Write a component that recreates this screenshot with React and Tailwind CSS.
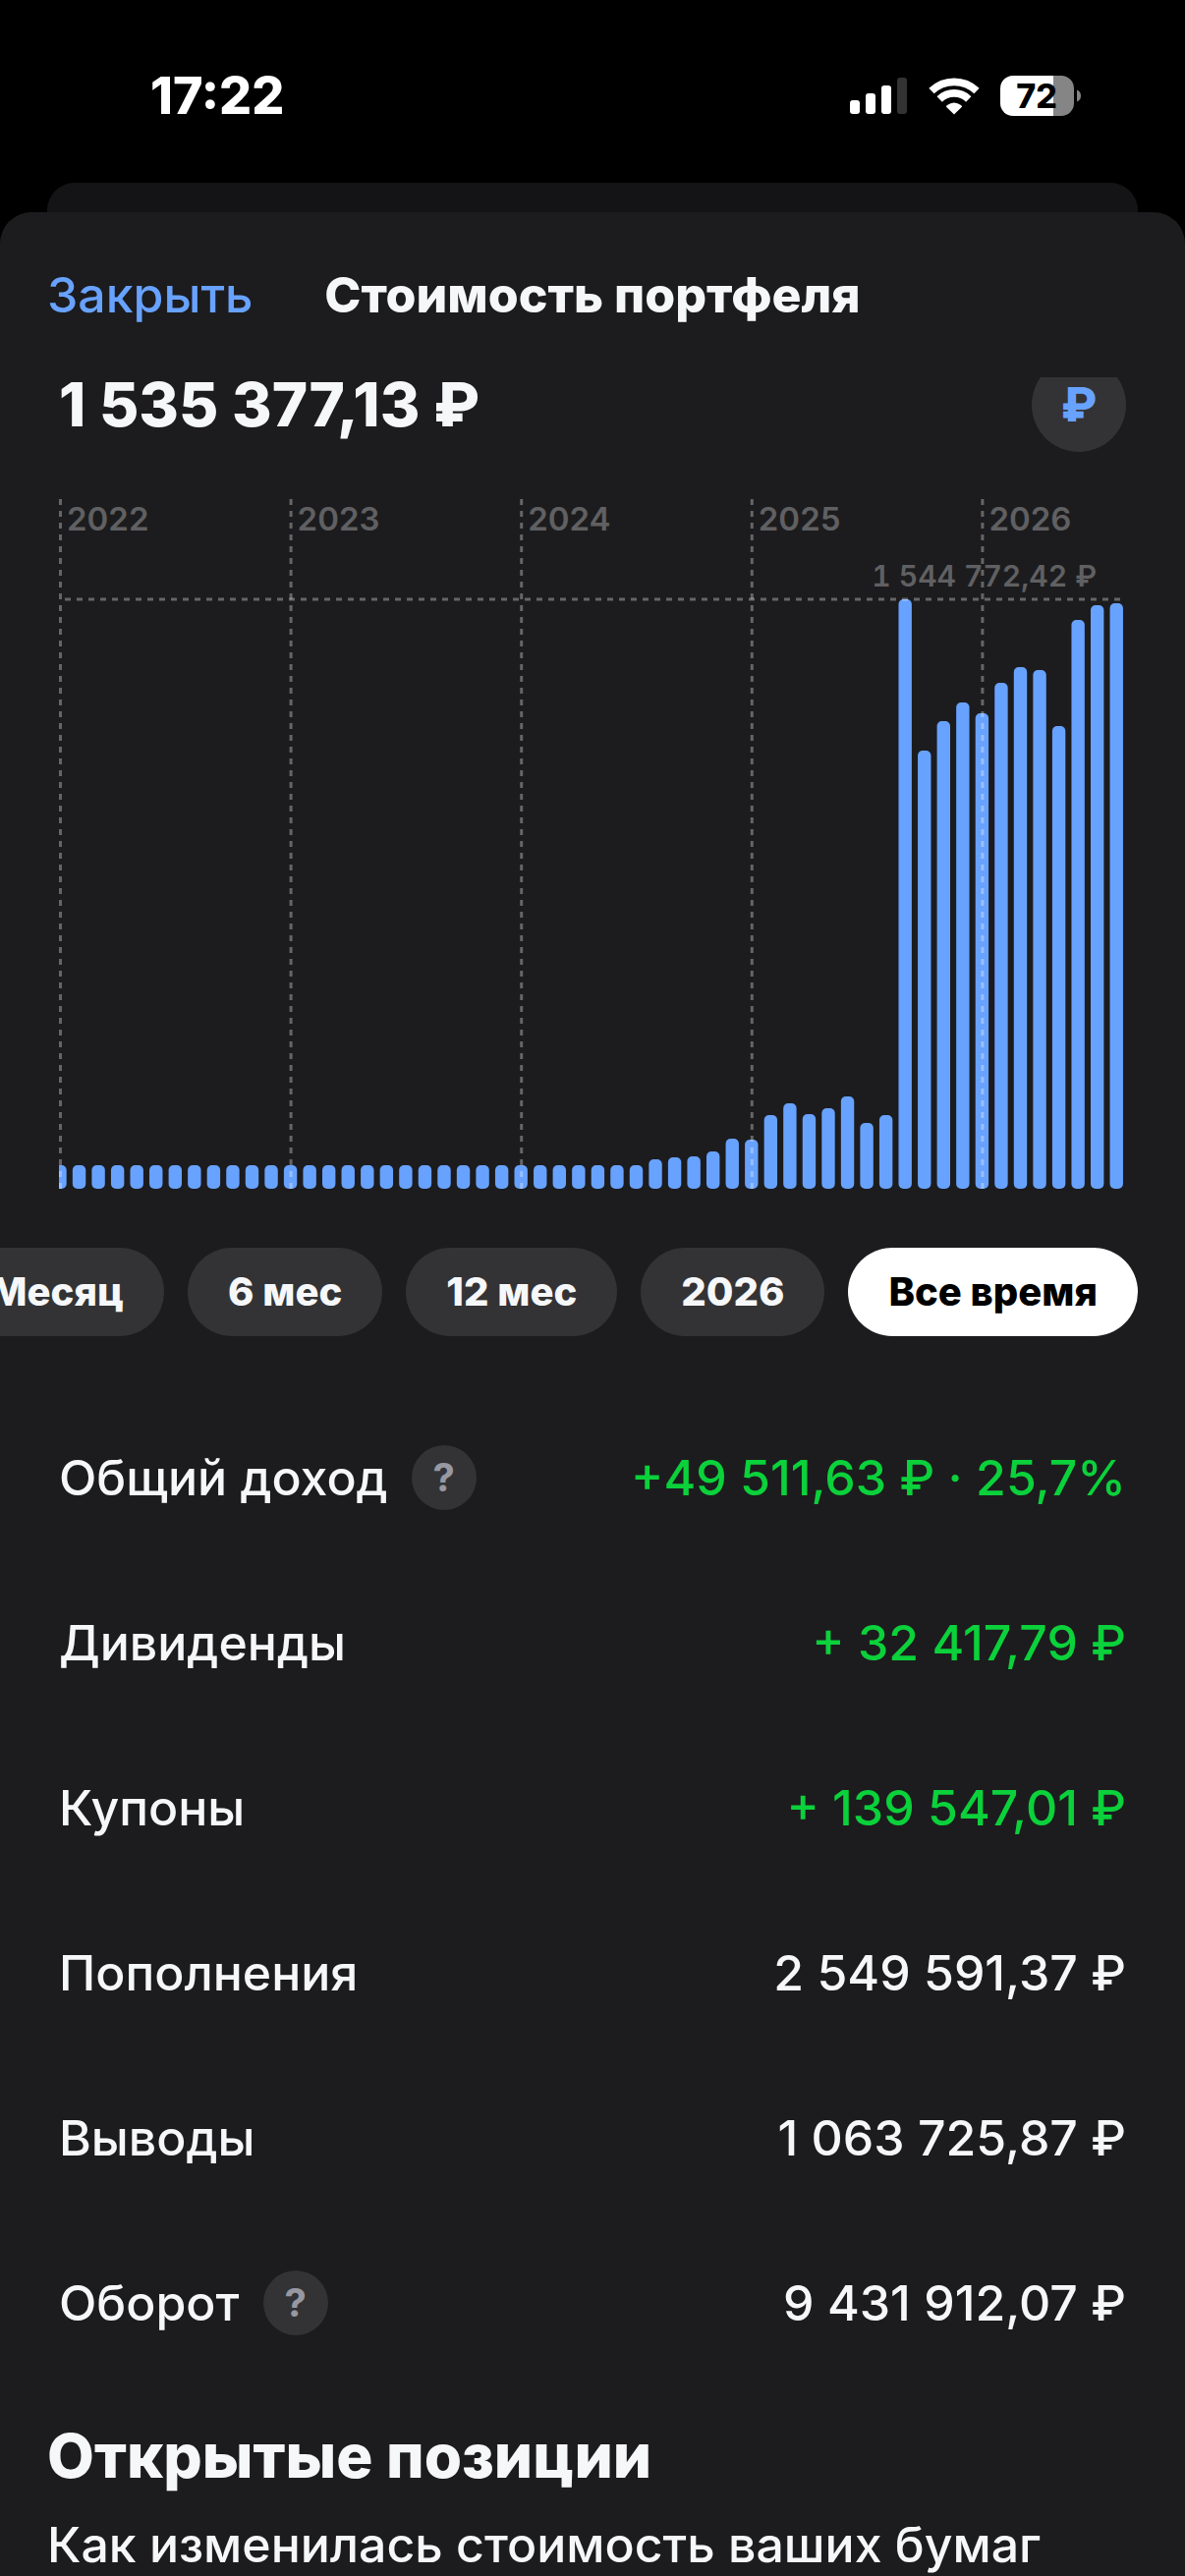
import React, { useState } from "react";

const bars = [
  ...Array(31).fill(24),
  30, 32, 33, 38, 51, 50, 75, 87, 76, 82, 94, 67, 75,
  600, 446, 476, 495, 484, 515, 531, 528, 471, 579, 594, 596,
];

const years = ["2022", "2023", "2024", "2025", "2026"];

const periods = ["Месяц", "6 мес", "12 мес", "2026", "Все время"];

const stats = [
  { label: "Общий доход", value: "+49 511,63 ₽ · 25,7%", hint: true, green: true },
  { label: "Дивиденды", value: "+ 32 417,79 ₽", green: true },
  { label: "Купоны", value: "+ 139 547,01 ₽", green: true },
  { label: "Пополнения", value: "2 549 591,37 ₽" },
  { label: "Выводы", value: "1 063 725,87 ₽" },
  { label: "Оборот", value: "9 431 912,07 ₽", hint: true },
];

const StatusIcons = () => (
  <svg width="236" height="42" viewBox="0 0 236 42" aria-hidden="true">
    <g fill="#fff">
      <rect x="0" y="25" width="10" height="14" rx="3" />
      <rect x="16" y="18" width="10" height="21" rx="3" />
      <rect x="32" y="10" width="10" height="29" rx="3" />
      <rect x="48" y="2" width="10" height="37" rx="3" fill="#333" />
      <path d="M106 39.5 L98 31.8 Q98 30.6 99 30 Q106 25 113 30 Q114 30.6 114 31.8 Z" />
    </g>
    <g fill="none" stroke="#fff" strokeWidth="7.6">
      <path d="M83 15.6 A33.2 33.2 0 0 1 129 15.6" />
      <path d="M91.2 23.9 A21.3 21.3 0 0 1 120.8 23.9" />
    </g>
    <clipPath id="battery">
      <rect x="153" y="0" width="75" height="41" rx="13" />
    </clipPath>
    <g clipPath="url(#battery)">
      <rect x="153" width="54" height="41" fill="#fff" />
      <rect x="207" width="21" height="41" fill="#858585" />
    </g>
    <path d="M231 14.5 Q235 16 235 20.5 Q235 25 231 26.5 Z" fill="#858585" />
    <text
      x="190"
      y="33"
      textAnchor="middle"
      className="fill-black text-[34px] font-extrabold"
    >
      72
    </text>
  </svg>
);

const Chart = () => {
  const step = 19.55;
  return (
    <svg
      viewBox="0 0 1086 702"
      className="h-auto w-full"
      role="img"
      aria-label="Стоимость портфеля"
    >
      {bars.map((h, i) => (
        <rect
          key={i}
          x={1 + i * step - 6.7}
          y={702 - h}
          width="13.4"
          height={h}
          rx="5"
          fill="#68a2ff"
        />
      ))}
      <g stroke="#fff" strokeOpacity="0.32" strokeWidth="3" strokeDasharray="6 6">
        {years.map((year, i) => (
          <line
            key={year}
            x1={1.5 + i * 12 * step}
            x2={1.5 + i * 12 * step}
            y1="0"
            y2="702"
          />
        ))}
        <line x1="6" x2="1081" y1="102" y2="102" />
      </g>
      <g className="fill-[#606062] font-semibold">
        {years.map((year, i) => (
          <text key={year} x={8 + i * 12 * step} y="32" className="text-[33px]">
            {year}
          </text>
        ))}
        <text x="1056" y="89" textAnchor="end" className="text-[30px] tabular-nums">
          1 544 772,42 ₽
        </text>
      </g>
    </svg>
  );
};

const App = () => {
  const [period, setPeriod] = useState("Все время");

  return (
    <div className="flex h-screen flex-col overflow-hidden bg-black font-['Inter',sans-serif] text-[#f6f7f9]">
      <div className="flex h-[186px] shrink-0 items-center justify-between pt-2.5 pr-[105px] pl-[153px]">
        <span className="text-[52px] font-extrabold text-white">17:22</span>
        <StatusIcons />
      </div>
      <div className="mx-12 h-[30px] shrink-0 rounded-t-[28px] bg-[#141416]"></div>

      <div className="flex min-h-0 flex-1 flex-col rounded-t-[32px] bg-[#1c1c1e]">
        <header className="grid h-42 shrink-0 grid-cols-[1fr_auto_1fr] items-center px-12">
          <button
            type="button"
            className="justify-self-start text-[50px] font-medium text-[#68a2ff]"
          >
            Закрыть
          </button>
          <h1 className="text-[50px] font-extrabold">Стоимость портфеля</h1>
        </header>

        <main className="min-h-0 flex-1 overflow-hidden">
          <section className="-mt-5 px-15">
            <div className="mb-12 flex items-center justify-between">
              <p className="text-[62px] leading-14 font-extrabold">1 535 377,13 ₽</p>
              <button
                type="button"
                aria-label="Валюта"
                className="size-24 rounded-full bg-[#333335] text-[48px] leading-none font-extrabold text-[#68a2ff]"
              >
                ₽
              </button>
            </div>
            <Chart />
          </section>

          <div className="mt-15 flex justify-end gap-6 overflow-hidden pr-12">
            {periods.map((item) => (
              <button
                key={item}
                type="button"
                onClick={() => setPeriod(item)}
                className={`h-[90px] shrink-0 rounded-full px-[41px] text-[40px] font-extrabold ${
                  item === period ? "bg-white text-black" : "bg-[#333335]"
                }`}
              >
                {item}
              </button>
            ))}
          </div>

          <dl className="mt-15 px-15">
            {stats.map((row) => (
              <div
                key={row.label}
                className="flex h-42 items-center justify-between text-[50px] font-medium"
              >
                <dt className="flex items-center gap-6">
                  {row.label}
                  {row.hint && (
                    <button
                      type="button"
                      className="size-[66px] rounded-full bg-[#333335] text-[40px] leading-none font-bold text-[#9798a2]"
                    >
                      ?
                    </button>
                  )}
                </dt>
                <dd className={row.green ? "text-[#0bd13b]" : ""}>{row.value}</dd>
              </div>
            ))}
          </dl>

          <section className="mt-9 px-12">
            <h2 className="text-[62px] leading-[72px] font-extrabold">Открытые позиции</h2>
            <p className="mt-6 text-[50px] leading-[60px] font-medium">
              Как изменилась стоимость ваших бумаг
            </p>
          </section>
        </main>
      </div>
    </div>
  );
};

export default App;
